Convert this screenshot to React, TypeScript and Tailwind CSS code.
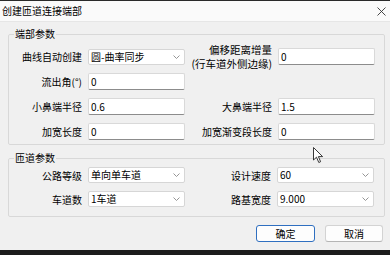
import React from "react";

const font = "font-['Noto_Sans_CJK_SC','Liberation_Sans',sans-serif]";

function TextBox({ value }: { value: string }) {
  return (
    <input
      readOnly
      value={value}
      className="ml-[6px] h-[17px] w-[97px] rounded-[2px] border border-[#d9d9d9] border-b-[#8c8c8c] bg-white pl-[2px] text-[10px] leading-[15px] text-black outline-none"
    />
  );
}

function Combo({ value }: { value: string }) {
  return (
    <div className="ml-[6px] flex h-[16px] w-[97px] items-center justify-between rounded-[2px] border border-[#d6d6d6] bg-white pl-[2px] pr-[4px] text-[10px] leading-[14px] text-black">
      <span>{value}</span>
      <svg width="7" height="4" viewBox="0 0 7 4" fill="none">
        <path d="M0.5 0.5 L3.5 3.5 L6.5 0.5" stroke="#8a8a8a" strokeWidth="0.9" />
      </svg>
    </div>
  );
}

function Label({ w, children }: { w: string; children: React.ReactNode }) {
  return <div className={`${w} shrink-0 text-right text-[10px] leading-[13px] text-black`}>{children}</div>;
}

export default function App() {
  return (
    <div className={`relative flex h-[255px] w-[390px] flex-col overflow-hidden bg-[#f0f0f0] ${font}`}>
      <div className="h-[1px] bg-[#2a2a2a]" />
      <div className="flex h-[21px] items-center justify-between border-b border-[#e6e6e6] bg-[#fafafa] pl-[2px] pr-[4px]">
        <span className="text-[10px] leading-[12px] text-black">创建匝道连接端部</span>
        <svg width="9" height="9" viewBox="0 0 9 9" className="mt-[1px]">
          <path d="M0.5 0.5 L8.5 8.5 M8.5 0.5 L0.5 8.5" stroke="#333" strokeWidth="0.9" />
        </svg>
      </div>

      <fieldset className="ml-[8px] mt-[6px] w-[377px] rounded-[2px] border border-[#d8d8d8] pb-[4px]">
        <legend className="ml-[5px] px-[1px] text-[10px] leading-[12px] text-black">端部参数</legend>
        <div className="mt-[8px] flex flex-col gap-[8px]">
          <div className="flex h-[17px] items-center">
            <Label w="w-[73px]">曲线自动创建</Label>
            <Combo value="圆-曲率同步" />
            <Label w="w-[87px]">
              <div className="text-[10.5px] leading-[14px]">偏移距离增量</div>
              <div className="text-[10.5px] leading-[14px]">(行车道外侧边缘)</div>
            </Label>
            <TextBox value="0" />
          </div>
          <div className="flex h-[17px] items-center">
            <Label w="w-[73px]">流出角(°)</Label>
            <TextBox value="0" />
          </div>
          <div className="flex h-[17px] items-center">
            <Label w="w-[73px]">小鼻端半径</Label>
            <TextBox value="0.6" />
            <Label w="w-[87px]">大鼻端半径</Label>
            <TextBox value="1.5" />
          </div>
          <div className="flex h-[17px] items-center">
            <Label w="w-[73px]">加宽长度</Label>
            <TextBox value="0" />
            <Label w="w-[87px]">加宽渐变段长度</Label>
            <TextBox value="0" />
          </div>
        </div>
      </fieldset>

      <fieldset className="ml-[8px] mt-[7px] w-[377px] rounded-[2px] border border-[#d8d8d8] pb-[9px]">
        <legend className="ml-[5px] px-[1px] text-[10px] leading-[12px] text-black">匝道参数</legend>
        <div className="mt-[3px] flex flex-col gap-[8px]">
          <div className="flex h-[16px] items-center">
            <Label w="w-[73px]">公路等级</Label>
            <Combo value="单向单车道" />
            <Label w="w-[86px]">设计速度</Label>
            <Combo value="60" />
          </div>
          <div className="flex h-[16px] items-center">
            <Label w="w-[73px]">车道数</Label>
            <Combo value="1车道" />
            <Label w="w-[86px]">路基宽度</Label>
            <Combo value="9.000" />
          </div>
        </div>
      </fieldset>

      <div className="mt-[8px] flex justify-end gap-[10px] pr-[7px]">
        <button className="flex h-[17px] w-[59px] items-center justify-center rounded-[3px] border border-[#2f6fc0] bg-[#fdfdfd] text-[10px] leading-[12px] text-black">
          确定
        </button>
        <button className="flex h-[17px] w-[58px] items-center justify-center rounded-[3px] border border-[#d3d3d3] border-b-[#b5b5b5] bg-[#fdfdfd] text-[10px] leading-[12px] text-black">
          取消
        </button>
      </div>

      <div className="flex-1" />
      <div className="h-[5px] bg-[#1c1c1c]" />

      <svg className="absolute left-[313px] top-[147px]" width="11" height="17" viewBox="0 0 11 17">
        <path d="M0.5 0.5 L0.5 13 L3.5 10.2 L5.8 15.5 L7.6 14.7 L5.4 9.6 L9.6 9.6 Z" fill="#fff" stroke="#222" strokeWidth="0.9" strokeLinejoin="round" />
      </svg>
    </div>
  );
}
